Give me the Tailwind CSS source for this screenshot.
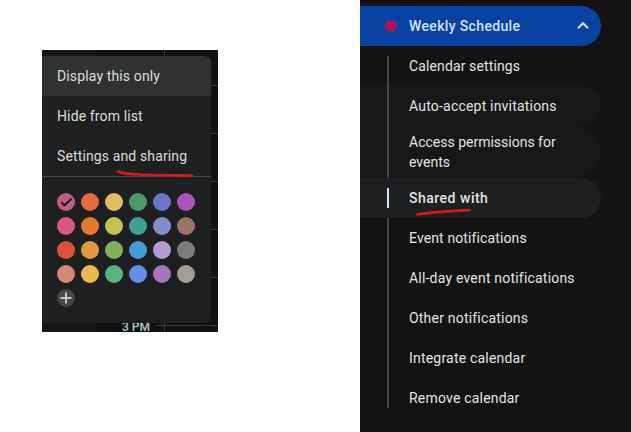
<!doctype html>
<html>
<head>
<meta charset="utf-8">
<script src="https://cdn.jsdelivr.net/npm/@tailwindcss/browser@4"></script>
</head>
<body class="bg-white font-['Roboto',sans-serif] overflow-hidden">
<div class="relative flex w-[631px] h-[432px] overflow-hidden bg-white">
  <div class="w-[360px] shrink-0 pl-[42px] pt-[50px]">
    <div class="relative w-[176px] h-[282px] bg-[#111112]">
      <!-- calendar grid behind the menu -->
      <div class="absolute left-0 top-0 w-[54px] h-[282px] bg-[#161617]"></div>
      <div class="absolute left-[122px] top-0 w-px h-[282px] bg-[#3a3b3c]"></div>
      <div class="absolute left-[169px] top-[35px] w-[7px] h-px bg-[#3a3b3c]"></div>
      <div class="absolute left-[169px] top-[83px] w-[7px] h-px bg-[#3a3b3c]"></div>
      <div class="absolute left-[169px] top-[131px] w-[7px] h-px bg-[#3a3b3c]"></div>
      <div class="absolute left-[169px] top-[179px] w-[7px] h-px bg-[#3a3b3c]"></div>
      <div class="absolute left-[169px] top-[227px] w-[7px] h-px bg-[#3a3b3c]"></div>
      <div class="absolute left-[114px] top-[275px] w-[62px] h-px bg-[#3a3b3c]"></div>
      <div class="absolute left-[80px] top-[273px] text-[12px] leading-[9px] text-[#b4cbd8] font-medium">3 PM</div>
      <!-- menu -->
      <div class="absolute left-0 top-[6px] w-[169px] h-[267px] bg-[#1e1f20] rounded-r-[6px] overflow-hidden text-[14px] tracking-[0.13px] text-[#dcdddc]">
        <div class="h-10 pl-[15px] flex items-center bg-[#303232] rounded-tr-[6px]">Display this only</div>
        <div class="h-10 pl-[15px] flex items-center">Hide from list</div>
        <div class="h-10 pl-[15px] flex items-center">Settings and sharing</div>
        <div class="h-px bg-[#444746]"></div>
        <div class="pl-[15px] pt-[16px] grid grid-cols-[repeat(6,18px)] auto-rows-[18px] gap-[6px]">
          <div class="rounded-full bg-[#c25a82] flex items-center justify-center">
            <svg viewBox="0 0 18 18" class="w-[18px] h-[18px]"><path d="M4.3 9.3 L7.5 12.3 L14.5 5.8" fill="none" stroke="#1a1a1c" stroke-width="2"/></svg>
          </div>
          <div class="rounded-full bg-[#e8693f]"></div>
          <div class="rounded-full bg-[#dfbd60]"></div>
          <div class="rounded-full bg-[#4d9a68]"></div>
          <div class="rounded-full bg-[#6d75c8]"></div>
          <div class="rounded-full bg-[#a855bf]"></div>
          <div class="rounded-full bg-[#dd5680]"></div>
          <div class="rounded-full bg-[#e27a36]"></div>
          <div class="rounded-full bg-[#bfc555]"></div>
          <div class="rounded-full bg-[#3fa08f]"></div>
          <div class="rounded-full bg-[#858dc6]"></div>
          <div class="rounded-full bg-[#987568]"></div>
          <div class="rounded-full bg-[#dd5233]"></div>
          <div class="rounded-full bg-[#e2993b]"></div>
          <div class="rounded-full bg-[#85ae5a]"></div>
          <div class="rounded-full bg-[#479ad6]"></div>
          <div class="rounded-full bg-[#b09dd3]"></div>
          <div class="rounded-full bg-[#7c7c7c]"></div>
          <div class="rounded-full bg-[#d9857a]"></div>
          <div class="rounded-full bg-[#e9b94e]"></div>
          <div class="rounded-full bg-[#58b281]"></div>
          <div class="rounded-full bg-[#668ee8]"></div>
          <div class="rounded-full bg-[#a578b3]"></div>
          <div class="rounded-full bg-[#a89c8e]"></div>
          <div class="rounded-full bg-[#444746] flex items-center justify-center">
            <svg viewBox="0 0 18 18" class="w-[18px] h-[18px]"><path d="M9 3.5 V14.5 M3.5 9 H14.5" fill="none" stroke="#c4c7c5" stroke-width="2"/></svg>
          </div>
        </div>
      </div>
    </div>
  </div>

  <div class="flex-1 relative bg-[#131314] pt-[6px] text-[14px] tracking-[0.2px] text-[#e3e3e3]">
    <div class="w-[241px] h-10 rounded-r-full bg-[#0842a0] flex items-center text-[#d3e3fd] font-medium tracking-[0.35px]">
      <div class="ml-[25px] w-3 h-3 rounded-full bg-[#ad1457]"></div>
      <div class="ml-[12px] flex-1">Weekly Schedule</div>
      <svg viewBox="0 0 14 14" class="w-[14px] h-[14px] mr-[11px]"><path d="M2 9.2 L7 4.2 L12 9.2" fill="none" stroke="#d3e3fd" stroke-width="2"/></svg>
    </div>
    <div class="absolute left-[27px] top-[56px] w-[2px] h-[352px] bg-[#444746]"></div>
    <div class="w-[241px] h-10 pl-[49px] flex items-center rounded-r-full tracking-[0.12px]">Calendar settings</div>
    <div class="w-[241px] h-10 pl-[49px] flex items-center rounded-r-[26px] bg-[#171718]">Auto-accept invitations</div>
    <div class="w-[241px] h-[52px] pl-[49px] pr-[30px] flex items-center rounded-r-[26px] bg-[#171718] leading-[20px] tracking-normal">Access permissions for events</div>
    <div class="relative w-[241px] h-10 pl-[49px] flex items-center rounded-r-full bg-[#1e1f20] font-medium tracking-[0.5px]">
      Shared with
      <div class="absolute left-[27px] top-[10px] w-[2px] h-5 bg-[#d3e3fd]"></div>
    </div>
    <div class="w-[241px] h-10 pl-[49px] flex items-center tracking-[0.12px]">Event notifications</div>
    <div class="w-[241px] h-10 pl-[49px] flex items-center">All-day event notifications</div>
    <div class="w-[241px] h-10 pl-[49px] flex items-center">Other notifications</div>
    <div class="w-[241px] h-10 pl-[49px] flex items-center">Integrate calendar</div>
    <div class="w-[241px] h-10 pl-[49px] flex items-center">Remove calendar</div>
  </div>

  <!-- red hand-drawn underlines -->
  <svg class="absolute left-0 top-0 pointer-events-none" width="631" height="432" viewBox="0 0 631 432">
    <path d="M118 171.5 C124 175 150 175 192 175.5" fill="none" stroke="#e0141c" stroke-width="2.7" stroke-linecap="round"/>
    <path d="M417.5 214.5 C430 212 450 211 469.5 210" fill="none" stroke="#e0141c" stroke-width="2.7" stroke-linecap="round"/>
  </svg>
</div>
</body>
</html>
